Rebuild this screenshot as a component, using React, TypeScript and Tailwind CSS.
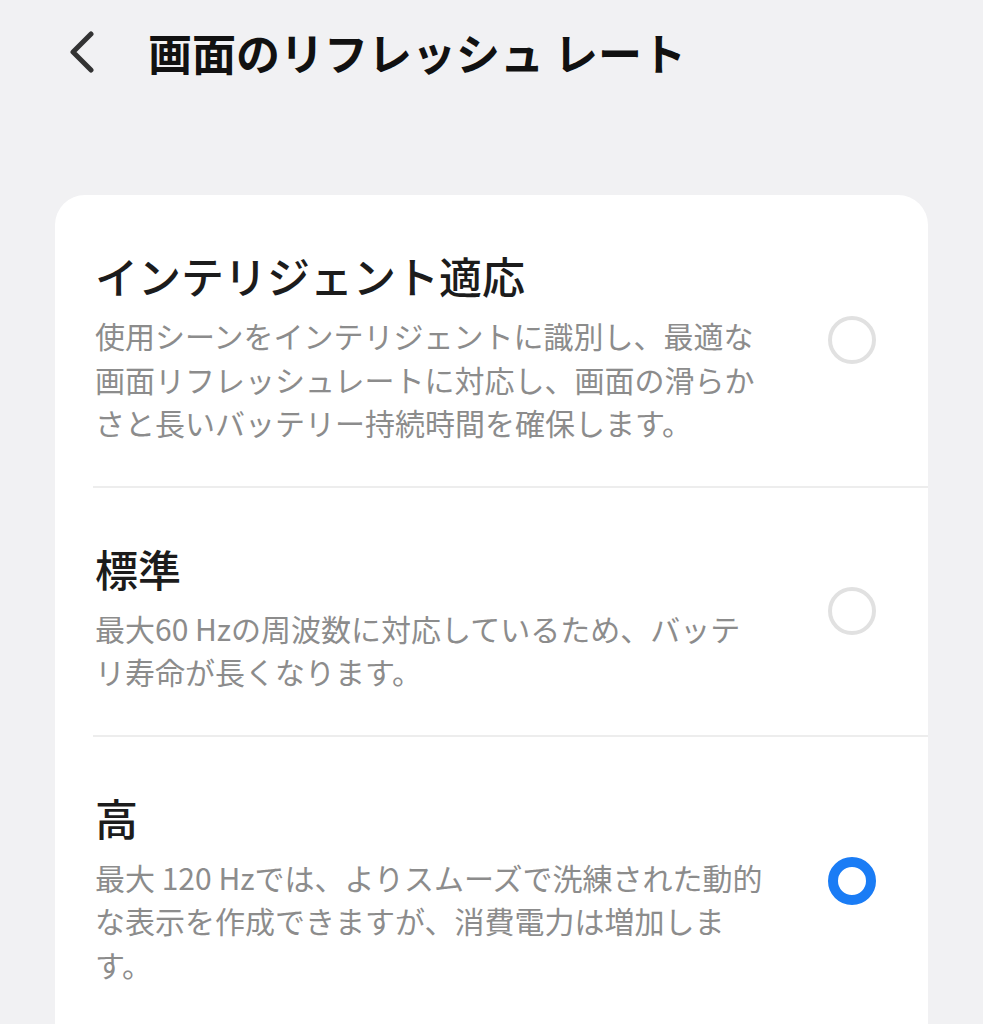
const options = [
  {
    title: "インテリジェント適応",
    lines: [
      "使用シーンをインテリジェントに識別し、最適な",
      "画面リフレッシュレートに対応し、画面の滑らか",
      "さと長いバッテリー持続時間を確保します。",
    ],
    selected: false,
  },
  {
    title: "標準",
    lines: ["最大60 Hzの周波数に対応しているため、バッテ", "リ寿命が長くなります。"],
    selected: false,
  },
  {
    title: "高",
    lines: [
      "最大 120 Hzでは、よりスムーズで洗練された動的",
      "な表示を作成できますが、消費電力は増加しま",
      "す。",
    ],
    selected: true,
  },
];

function Radio({ on }: { on: boolean }) {
  return on ? (
    <div className="mb-[12px] h-12 w-12 shrink-0 rounded-full border-[10px] border-[#1a7cf5]" />
  ) : (
    <div className="mb-[12px] h-12 w-12 shrink-0 rounded-full border-4 border-[#e1e1e1]" />
  );
}

export default function App() {
  return (
    <div
      className="min-h-screen bg-[#f1f1f3]"
      style={{ fontFamily: '"Noto Sans CJK JP", "Noto Sans", sans-serif' }}
    >
      <header className="flex h-[104px] items-center pl-[66px]">
        <svg viewBox="0 0 30 42" className="h-[42px] w-[30px]" fill="none">
          <path
            d="M25 3 L7 21 L25 39"
            stroke="#333333"
            strokeWidth={5}
            strokeLinecap="round"
            strokeLinejoin="round"
          />
        </svg>
        <h1 className="ml-[52px] text-[44px] font-bold leading-none text-[#111]">
          画面のリフレッシュ レート
        </h1>
      </header>

      <main className="mx-[55px] mt-[91px] overflow-hidden rounded-t-[30px] bg-white pb-[60px]">
        {options.map((o, i) => (
          <div key={o.title}>
            {i > 0 && <div className="ml-[38px] h-[2px] bg-[#ededed]" />}
            <div className="flex items-center pb-[41px] pl-[40px] pr-[52px] pt-[52px]">
              <div className="flex-1">
                <div className="text-[43px] font-medium leading-[56px] text-[#1c1c1c]">
                  {o.title}
                </div>
                <p className="mt-[11px] text-[30px] leading-[43.5px] text-[#8c8c8c]">
                  {o.lines.map((l, j) => (
                    <span key={j} className="block whitespace-nowrap">
                      {l}
                    </span>
                  ))}
                </p>
              </div>
              <Radio on={o.selected} />
            </div>
          </div>
        ))}
      </main>
    </div>
  );
}
